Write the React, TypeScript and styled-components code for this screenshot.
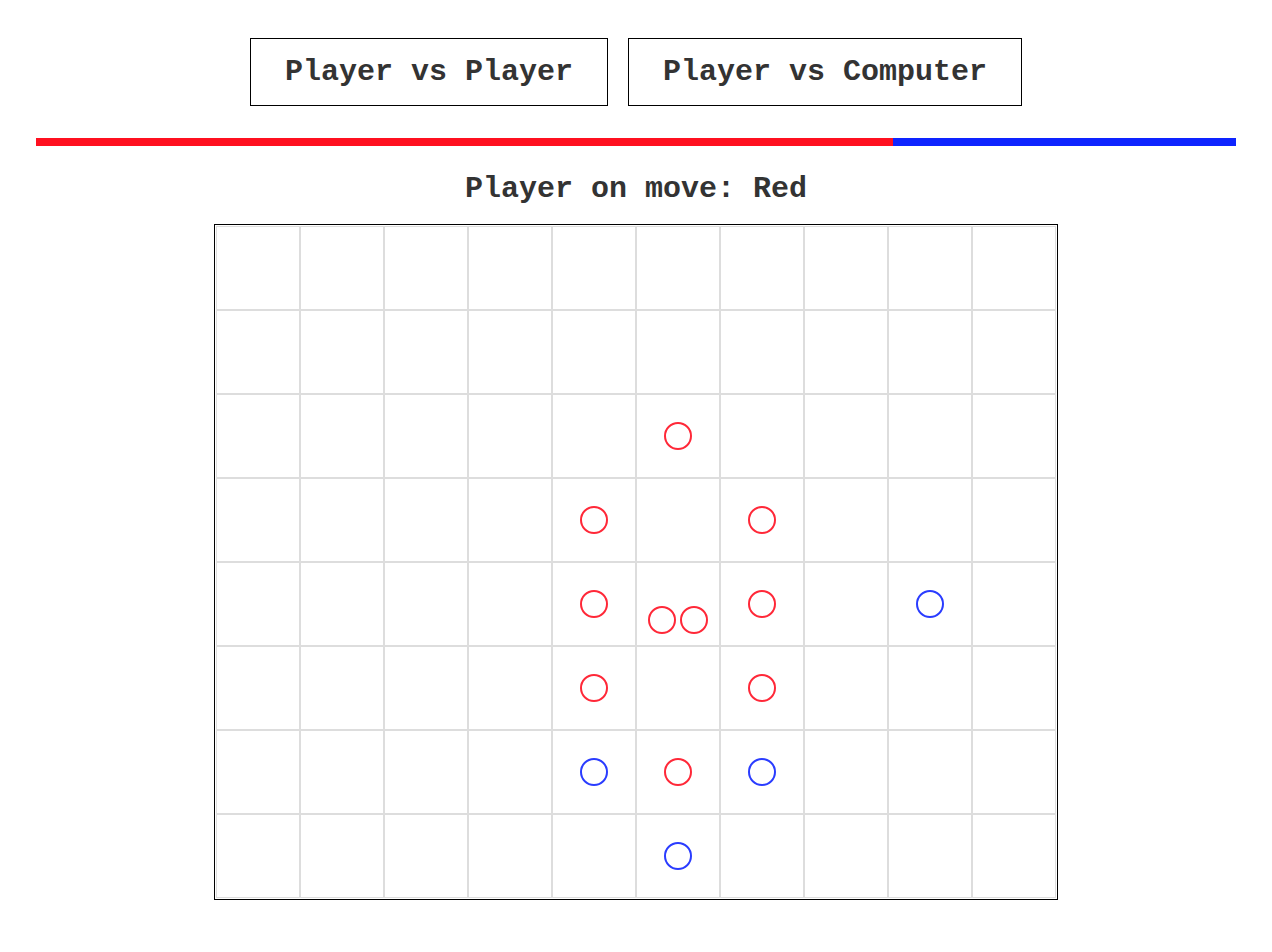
import React from "react";
import styled, { createGlobalStyle } from "styled-components";

const GlobalStyle = createGlobalStyle`
  html, body { margin: 0; padding: 0; background: #fff; }
  body { font-family: "Liberation Mono", "Courier New", monospace; color: #333; }
`;

const RED = "#ff1020";
const BLUE = "#0e24ff";
const RED_STROKE = "#ff2838";
const BLUE_STROKE = "#2a3cff";

const Page = styled.div`
  display: flex;
  flex-direction: column;
  align-items: center;
  padding-top: 38px;
`;

const Toolbar = styled.div`
  display: flex;
  gap: 20px;
  justify-content: center;
`;

const ModeButton = styled.button`
  font-family: "Liberation Mono", "Courier New", monospace;
  font-weight: bold;
  font-size: 30px;
  line-height: 34px;
  color: #333;
  background: #fff;
  border: 1px solid #000;
  border-radius: 0;
  padding: 16px 34px;
  margin: 0;
  cursor: pointer;
`;

const ScoreBar = styled.div`
  display: flex;
  width: 1200px;
  height: 8px;
  margin-top: 32px;
`;

const ScoreSegment = styled.div<{ $color: string }>`
  height: 100%;
  background: ${(p) => p.$color};
`;

const Status = styled.div`
  margin-top: 26px;
  font-weight: bold;
  font-size: 30px;
  line-height: 34px;
  color: #333;
`;

const Board = styled.div`
  margin-top: 18px;
  border: 1px solid #000;
  padding: 1px;
  display: grid;
  grid-template-columns: repeat(10, 84px);
  grid-auto-rows: 84px;
`;

const Cell = styled.div`
  box-sizing: border-box;
  border: 1px solid #ddd;
  display: flex;
  align-items: center;
  justify-content: center;
`;

const Stone = styled.div<{ $color: string }>`
  box-sizing: border-box;
  width: 28px;
  height: 28px;
  border-radius: 50%;
  border: 2px solid ${(p) => p.$color};
`;

const Stack = styled.div`
  display: flex;
  gap: 4px;
  margin-top: 32px;
`;

type Piece = "r" | "b" | "rr";

const pieces: Record<string, Piece> = {
  "2,5": "r",
  "3,4": "r",
  "3,6": "r",
  "4,4": "r",
  "4,5": "rr",
  "4,6": "r",
  "4,8": "b",
  "5,4": "r",
  "5,6": "r",
  "6,4": "b",
  "6,5": "r",
  "6,6": "b",
  "7,5": "b",
};

const ROWS = 8;
const COLS = 10;

function renderPiece(p?: Piece) {
  if (!p) return null;
  if (p === "r") return <Stone $color={RED_STROKE} />;
  if (p === "b") return <Stone $color={BLUE_STROKE} />;
  return (
    <Stack>
      <Stone $color={RED_STROKE} />
      <Stone $color={RED_STROKE} />
    </Stack>
  );
}

export default function App() {
  let red = 0;
  let blue = 0;
  Object.values(pieces).forEach((p) => {
    if (p === "r") red += 1;
    else if (p === "rr") red += 2;
    else blue += 1;
  });
  const total = red + blue;
  const redPct = (red / total) * 100;

  const cells: React.ReactNode[] = [];
  for (let r = 0; r < ROWS; r++) {
    for (let c = 0; c < COLS; c++) {
      cells.push(<Cell key={`${r}-${c}`}>{renderPiece(pieces[`${r},${c}`])}</Cell>);
    }
  }

  return (
    <>
      <GlobalStyle />
      <Page>
        <Toolbar>
          <ModeButton>Player vs Player</ModeButton>
          <ModeButton>Player vs Computer</ModeButton>
        </Toolbar>
        <ScoreBar>
          <ScoreSegment $color={RED} style={{ width: `${redPct}%` }} />
          <ScoreSegment $color={BLUE} style={{ width: `${100 - redPct}%` }} />
        </ScoreBar>
        <Status>Player on move: Red</Status>
        <Board>{cells}</Board>
      </Page>
    </>
  );
}
